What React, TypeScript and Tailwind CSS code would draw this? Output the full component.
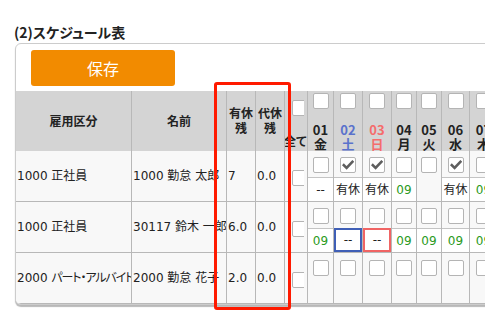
import React from "react";

type Lower = null | { t: string; c?: "green" | "dark"; box?: "blue" | "red" };

const days = [
  { n: "01", d: "金", w: 26, color: "text-[#222]" },
  { n: "02", d: "土", w: 29, color: "text-[#5a72cc]" },
  { n: "03", d: "日", w: 29, color: "text-[#f56c6c]" },
  { n: "04", d: "月", w: 25, color: "text-[#222]" },
  { n: "05", d: "火", w: 25, color: "text-[#222]" },
  { n: "06", d: "水", w: 28, color: "text-[#222]" },
  { n: "07", d: "木", w: 28, color: "text-[#222]" },
  { n: "08", d: "金", w: 28, color: "text-[#222]" },
];

const g = (t: string): Lower => ({ t, c: "green" });
const k = (t: string): Lower => ({ t, c: "dark" });

const rows: {
  code: string;
  type: string;
  tight?: boolean;
  name: string;
  yu: string;
  dai: string;
  checked: boolean[];
  lower: Lower[] | null;
}[] = [
  {
    code: "1000",
    type: "正社員",
    name: "1000 勤怠 太郎",
    yu: "7",
    dai: "0.0",
    checked: [false, true, true, false, false, true, false, false],
    lower: [k("--"), k("有休"), k("有休"), g("09"), null, k("有休"), g("09"), g("09")],
  },
  {
    code: "1000",
    type: "正社員",
    name: "30117 鈴木 一郎",
    yu: "6.0",
    dai: "0.0",
    checked: [false, false, false, false, false, false, false, false],
    lower: [
      g("09"),
      { t: "--", c: "dark", box: "blue" },
      { t: "--", c: "dark", box: "red" },
      g("09"),
      g("09"),
      g("09"),
      g("09"),
      g("09"),
    ],
  },
  {
    code: "2000",
    type: "パート・アルバイト",
    tight: true,
    name: "2000 勤怠 花子",
    yu: "2.0",
    dai: "0.0",
    checked: [false, false, false, false, false, false, false, false],
    lower: null,
  },
];

function Box({ checked = false }: { checked?: boolean }) {
  return (
    <div className="w-[16px] h-[16px] shrink-0 border border-[#b4b4b4] rounded-[2px] bg-white flex items-center justify-center">
      {checked && (
        <svg width="12" height="12" viewBox="0 0 12 12">
          <path d="M1.8 6.2 L4.6 9 L10.4 2.8" fill="none" stroke="#5e5e5e" strokeWidth="2.6" strokeLinecap="square" />
        </svg>
      )}
    </div>
  );
}

function ClipBox() {
  return (
    <div className="w-[12px] h-[16px] overflow-hidden ml-[7px] shrink-0">
      <Box />
    </div>
  );
}

const body = '"DejaVu Sans", "Noto Sans CJK JP", sans-serif';

export default function App() {
  return (
    <div
      className="relative w-[485px] h-[330px] overflow-hidden bg-white text-[#222] [font-feature-settings:'palt']"
      style={{ fontFamily: '"Noto Sans CJK JP", "Noto Sans", sans-serif' }}
    >
      <div className="pt-[22px] pl-[14px] text-[14px] leading-[20px] font-bold text-[#222]">(2)スケジュール表</div>
      <div className="ml-[15px] mt-[1px] w-[640px] border border-[#cccccc] rounded-[6px] bg-white shadow-[0_2px_1px_rgba(0,0,0,0.28)] overflow-hidden">
        <div className="pt-[6px] pb-[5px] pl-[15px]">
          <div className="w-[144px] h-[36px] rounded-[3px] bg-[#f28b00] text-white text-[16px] flex items-center justify-center">
            保存
          </div>
        </div>
        {/* header */}
        <div className="flex h-[60px] bg-[#d4d4d4] text-[12px] font-bold text-[#222]">
          <div className="w-[116px] shrink-0 border-r border-[#b8b8b8] flex items-center justify-center">雇用区分</div>
          <div className="w-[95px] shrink-0 border-r border-[#b8b8b8] flex items-center justify-center">名前</div>
          <div className="w-[29px] shrink-0 border-r border-[#b8b8b8] flex items-center justify-center">
            <div className="text-center leading-[15px] pb-[2px]">
              有休
              <br />残
            </div>
          </div>
          <div className="w-[29px] shrink-0 border-r border-[#b8b8b8] flex items-center justify-center">
            <div className="text-center leading-[15px] pb-[2px]">
              代休
              <br />残
            </div>
          </div>
          <div className="w-[23px] shrink-0 border-r border-[#b8b8b8] flex flex-col pt-[9px] overflow-hidden">
            <ClipBox />
            <div className="mt-[17px] leading-[15px] whitespace-nowrap -ml-[1px]">全て</div>
          </div>
          {days.map((d, i) => (
            <div
              key={i}
              style={{ width: d.w }}
              className="shrink-0 border-r border-[#b8b8b8] flex flex-col items-center justify-between pt-[2px]"
            >
              <Box />
              <div className={`text-[13px] leading-[14px] text-center ${d.color}`}>
                {d.n}
                <br />
                {d.d}
              </div>
            </div>
          ))}
        </div>
        {/* body */}
        {rows.map((r, ri) => (
          <div key={ri} className="flex h-[51px] bg-[#f8f8f8] border-b border-[#b8b8b8] text-[12px]" style={{ fontFamily: body }}>
            <div className="w-[116px] shrink-0 border-r border-[#b8b8b8] flex items-center pl-[1px] whitespace-nowrap overflow-hidden">
              <span>
                {r.code + " "}
                <span className={r.tight ? "tracking-[-1.1px]" : ""}>{r.type}</span>
              </span>
            </div>
            <div className="w-[95px] shrink-0 border-r border-[#b8b8b8] flex items-center pl-[1px] whitespace-nowrap overflow-hidden">
              {r.name}
            </div>
            <div className="w-[29px] shrink-0 border-r border-[#b8b8b8] flex items-center pl-[1px]">{r.yu}</div>
            <div className="w-[29px] shrink-0 border-r border-[#b8b8b8] flex items-center pl-[1px]">{r.dai}</div>
            <div className="w-[23px] shrink-0 border-r border-[#b8b8b8] flex items-center pt-[4px]">
              <ClipBox />
            </div>
            {days.map((d, i) => {
              const lw = r.lower ? r.lower[i] : null;
              return (
                <div key={i} style={{ width: d.w }} className="shrink-0 border-r border-[#b8b8b8] flex flex-col">
                  <div className={`h-[26px] flex justify-center ${ri === 2 ? "pt-[7px]" : "pt-[6px]"}`}>
                    <Box checked={r.checked[i]} />
                  </div>
                  {lw && (
                    <div
                      className={`h-[24px] bg-white flex items-center justify-center whitespace-nowrap overflow-hidden text-[12px] ${
                        lw.box === "blue"
                          ? "border-2 border-[#3f5fb6]"
                          : lw.box === "red"
                          ? "border-2 border-[#f06464]"
                          : "border-t border-[#c4c4c4]"
                      } ${lw.c === "green" ? "text-[#2a9a22]" : "text-[#222]"}`}
                    >
                      {lw.t}
                    </div>
                  )}
                </div>
              );
            })}
          </div>
        ))}
      </div>
      <div className="absolute left-[214px] top-[82px] w-[77px] h-[228px] border-[3px] border-[#ff1a00] rounded-[3px] pointer-events-none" />
    </div>
  );
}
